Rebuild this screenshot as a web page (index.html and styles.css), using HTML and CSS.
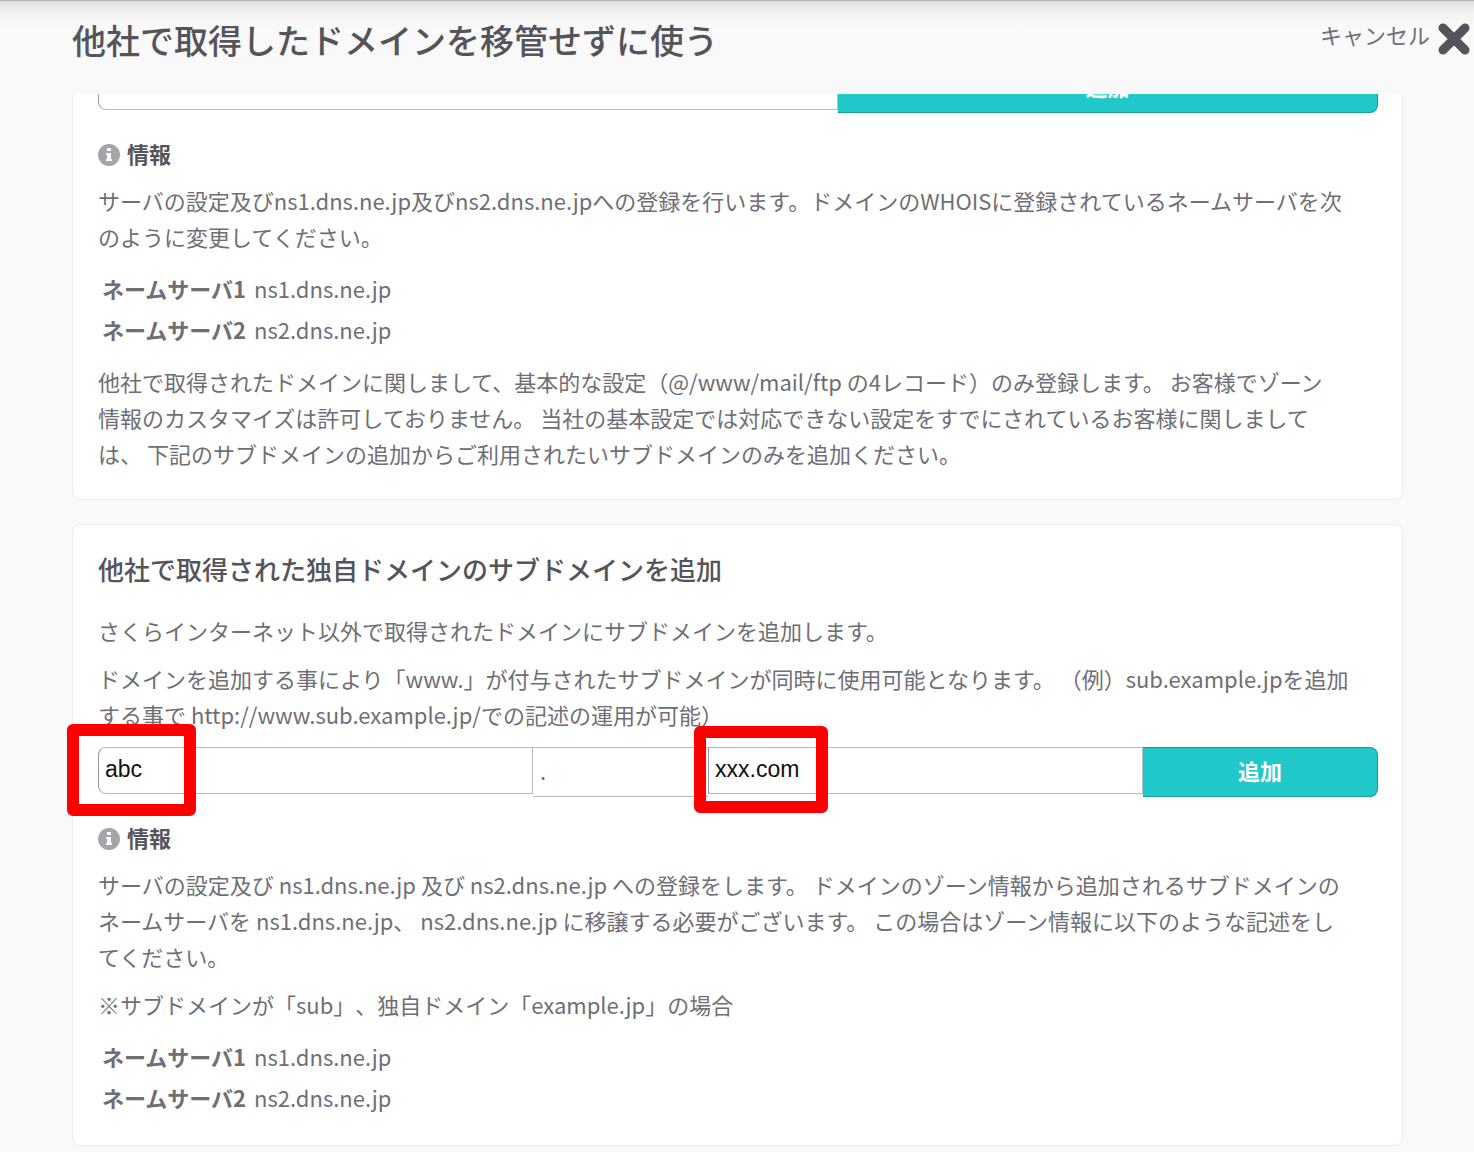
FILE: index.html
```html
<!doctype html>
<html lang="ja">
    <head>
        <meta charset="utf-8">
        <meta name="viewport" content="width=device-width, initial-scale=1.0">
        <title>他社で取得したドメインを移管せずに使う</title>
        <link rel="stylesheet" href="styles.css">
    </head>
    <body>
        <header class="header">
            <h1>他社で取得したドメインを移管せずに使う</h1>
            <a href="#" class="cancel">
                キャンセル
                <svg class="icon-close" viewBox="0 0 32 32" aria-hidden="true">
                    <path d="M5 5L27 27M27 5L5 27" fill="none" stroke="#55545a" stroke-width="9" stroke-linecap="round"/>
                </svg>
            </a>
        </header>

        <main class="content">
            <section class="card card-scrolled">
                <form class="domain-form">
                    <input type="text" class="field field-first" aria-label="ドメイン">
                    <button type="submit" class="button-add">追加</button>
                </form>

                <h3 class="info">
                    <svg class="icon-info" viewBox="0 0 22 22" aria-hidden="true">
                        <circle cx="11" cy="11" r="11" fill="#a5a4ab"/>
                        <path d="M9 4h4v3H9zM8 9h5v6h1v2H8v-2h1v-4H8z" fill="#fff"/>
                    </svg>
                    情報
                </h3>
                <p>サーバの設定及びns1.dns.ne.jp及びns2.dns.ne.jpへの登録を行います。ドメインのWHOISに登録されているネームサーバを次<br>のように変更してください。</p>
                <table class="nameservers">
                    <tr><th scope="row">ネームサーバ1</th><td>ns1.dns.ne.jp</td></tr>
                    <tr><th scope="row">ネームサーバ2</th><td>ns2.dns.ne.jp</td></tr>
                </table>
                <p>他社で取得されたドメインに関しまして、基本的な設定（@/www/mail/ftp の4レコード）のみ登録します。 お客様でゾーン<br>情報のカスタマイズは許可しておりません。 当社の基本設定では対応できない設定をすでにされているお客様に関しまして<br>は、 下記のサブドメインの追加からご利用されたいサブドメインのみを追加ください。</p>
            </section>

            <section class="card">
                <h2>他社で取得された独自ドメインのサブドメインを追加</h2>
                <p>さくらインターネット以外で取得されたドメインにサブドメインを追加します。</p>
                <p>ドメインを追加する事により「www.」が付与されたサブドメインが同時に使用可能となります。 （例）sub.example.jpを追加<br>する事で http://www.sub.example.jp/での記述の運用が可能）</p>

                <form class="subdomain-form">
                    <div class="marked">
                        <input type="text" class="field field-first" value="abc" aria-label="サブドメイン">
                        <span class="mark mark-sub"></span>
                    </div>
                    <span class="dot">.</span>
                    <div class="marked">
                        <input type="text" class="field" value="xxx.com" aria-label="独自ドメイン">
                        <span class="mark mark-domain"></span>
                    </div>
                    <button type="submit" class="button-add">追加</button>
                </form>

                <h3 class="info">
                    <svg class="icon-info" viewBox="0 0 22 22" aria-hidden="true">
                        <circle cx="11" cy="11" r="11" fill="#a5a4ab"/>
                        <path d="M9 4h4v3H9zM8 9h5v6h1v2H8v-2h1v-4H8z" fill="#fff"/>
                    </svg>
                    情報
                </h3>
                <p>サーバの設定及び ns1.dns.ne.jp 及び ns2.dns.ne.jp への登録をします。 ドメインのゾーン情報から追加されるサブドメインの<br>ネームサーバを ns1.dns.ne.jp、 ns2.dns.ne.jp に移譲する必要がございます。 この場合はゾーン情報に以下のような記述をし<br>てください。</p>
                <p>※サブドメインが「sub」、独自ドメイン「example.jp」の場合</p>
                <table class="nameservers">
                    <tr><th scope="row">ネームサーバ1</th><td>ns1.dns.ne.jp</td></tr>
                    <tr><th scope="row">ネームサーバ2</th><td>ns2.dns.ne.jp</td></tr>
                </table>
            </section>
        </main>
    </body>
</html>
```

FILE: styles.css
```css
* {
    box-sizing: border-box;
}
body {
    margin: 0;
    background: #f9f9f9;
    color: #6f6e75;
    font-family: "Noto Sans CJK JP", sans-serif;
    font-size: 22px;
    line-height: 36px;
    text-spacing-trim: space-all;
}

.header {
    display: flex;
    justify-content: space-between;
    align-items: flex-start;
    height: 94px;
    padding: 15px 4px 0 72px;
    border-top: solid 1px #b4b4b4;
    background: linear-gradient(180deg, #dedede, #f3f3f3 12px, #f9f9f9 26px);
}
h1, h2, h3 {
    margin: 0;
    color: #55545a;
    font-weight: 500;
}
h1 {
    font-size: 34px;
    line-height: 48px;
}
h2 {
    margin: 2px 0 25px;
    font-size: 26px;
}
.cancel {
    display: flex;
    align-items: flex-start;
    gap: 8px;
    color: #6f6e75;
    text-decoration: none;
}
.icon-close {
    width: 32px;
    height: 32px;
    margin-top: 7px;
}

/* the first card is scrolled partly under the header */
.content {
    overflow: hidden;
    padding: 0 71px 5px 72px;
}
.card {
    margin-bottom: 24px;
    padding: 24px 24px 28px 25px;
    border: solid 1px #ececec;
    border-radius: 8px;
    background: #fff;
}
.card:last-child {
    margin-bottom: 0;
}
.card-scrolled {
    margin-top: -56px;
}
p {
    margin: 0 0 12px;
}
p:last-child {
    margin-bottom: 0;
}

.domain-form, .subdomain-form {
    display: grid;
    align-items: start;
    margin: 15px 0 22px;
}
.domain-form {
    grid-template-columns: 37fr 27fr;
    margin-top: 0;
}
.subdomain-form {
    grid-template-columns: 435fr 175fr 435fr 235fr;
}
.field {
    display: block;
    width: 100%;
    height: 47px;
    padding: 0 6px 2px;
    border: solid 1px #bbb;
    border-left-color: #999;
    border-radius: 0;
    background: #fff;
    color: #111;
    font-family: "Liberation Sans", Arial, sans-serif;
    font-size: 23px;
}
.field-first {
    border-radius: 8px 0 0 8px;
}
.dot {
    height: 50px;
    padding: 4px 7px;
    border-top: solid 1px #bbb;
    border-bottom: solid 1px #bbb;
}
.button-add {
    height: 50px;
    padding: 0 0 5px;
    border: solid 1px #149c9c;
    border-left: 0;
    border-radius: 0 8px 8px 0;
    background: #20c8c9;
    color: #fff;
    font-family: inherit;
    font-size: 22px;
    font-weight: 700;
}

/* red frames over the example values */
.marked {
    position: relative;
}
.mark {
    position: absolute;
    border: solid 12px #f00;
    border-radius: 6px;
    pointer-events: none;
}
.mark-sub {
    top: -23px;
    left: -31px;
    width: 129px;
    height: 92px;
}
.mark-domain {
    top: -21px;
    left: -14px;
    width: 134px;
    height: 87px;
}

.info {
    display: flex;
    align-items: center;
    gap: 7px;
    margin-bottom: 11px;
    font-size: 22px;
    font-weight: 700;
}
.icon-info {
    width: 22px;
    height: 22px;
    margin-top: 4px;
}

.nameservers {
    margin: 13px 0 14px;
    border-spacing: 0;
}
.nameservers:last-child {
    margin-bottom: 0;
}
.nameservers th, .nameservers td {
    height: 41px;
    padding: 2px 4px;
    text-align: left;
}
.nameservers th {
    font-weight: 700;
}
```
